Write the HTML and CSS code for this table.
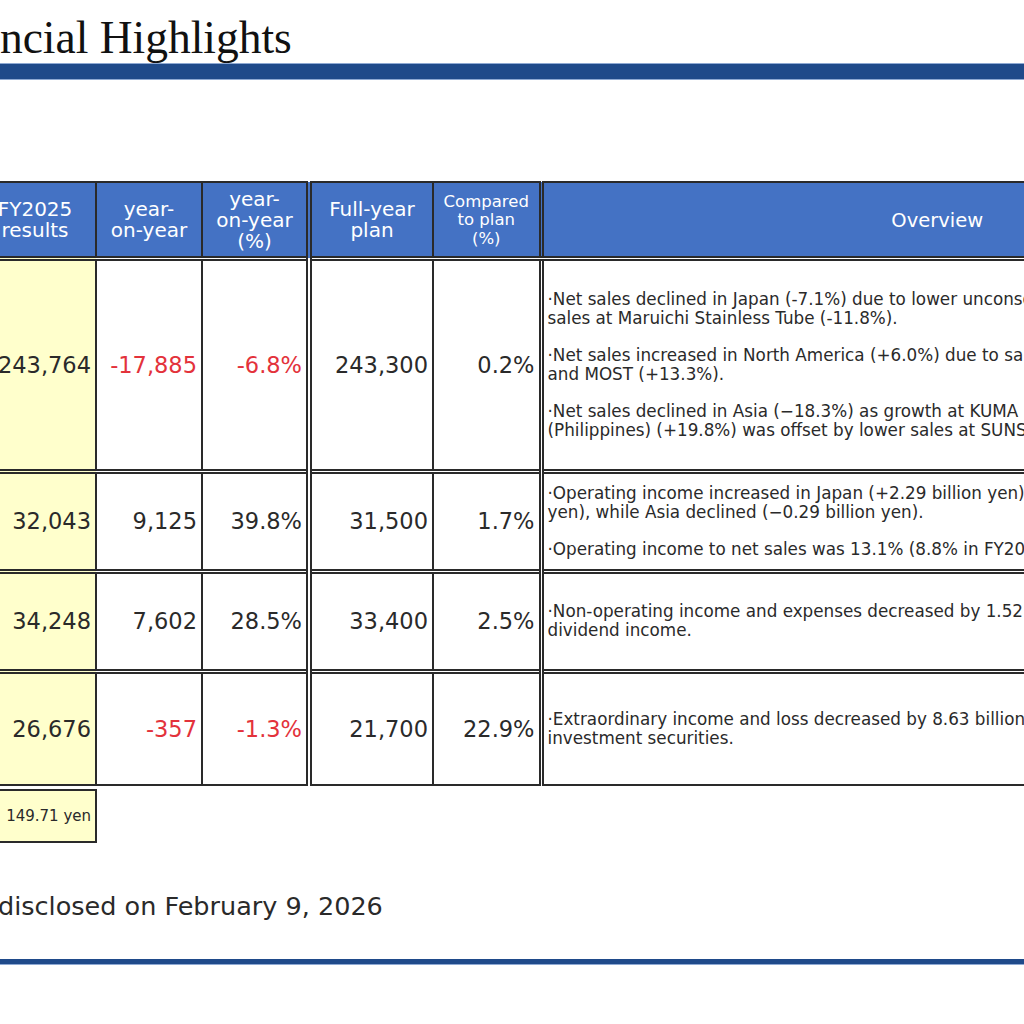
FILE: index.html
```html
<!DOCTYPE html>
<html>

<head>
    <meta charset="utf-8">
    <link rel="stylesheet" href="styles.css">
</head>

<body>

    <div class="slide">
        <h1 class="title">Financial Highlights</h1>
        <div class="rule"></div>

        <table class="results">
            <colgroup>
                <col class="c-fy">
                <col class="c-yoy">
                <col class="c-yoyp">
                <col class="c-plan">
                <col class="c-cmp">
                <col class="c-ov">
            </colgroup>
            <thead>
                <tr>
                    <th>FY2025<br>results</th>
                    <th>year-<br>on-year</th>
                    <th>year-<br>on-year<br>(%)</th>
                    <th class="grp">Full-year<br>plan</th>
                    <th class="small">Compared<br>to plan<br>(%)</th>
                    <th class="grp2 ov-head">Overview</th>
                </tr>
            </thead>
            <tbody>
                <tr class="r1">
                    <td class="fy">243,764</td>
                    <td class="neg">-17,885</td>
                    <td class="neg">-6.8%</td>
                    <td class="grp">243,300</td>
                    <td>0.2%</td>
                    <td class="ov grp2">
                        <p>·Net sales declined in Japan (-7.1%) due to lower unconsolidated<br>sales at Maruichi Stainless Tube (-11.8%).</p>
                        <p>·Net sales increased in North America (+6.0%) due to sales<br>and MOST (+13.3%).</p>
                        <p>·Net sales declined in Asia (−18.3%) as growth at KUMA<br>(Philippines) (+19.8%) was offset by lower sales at SUNSCO.</p>
                    </td>
                </tr>
                <tr class="r2">
                    <td class="fy">32,043</td>
                    <td>9,125</td>
                    <td>39.8%</td>
                    <td class="grp">31,500</td>
                    <td>1.7%</td>
                    <td class="ov grp2">
                        <p>·Operating income increased in Japan (+2.29 billion yen)<br>yen), while Asia declined (−0.29 billion yen).</p>
                        <p>·Operating income to net sales was 13.1% (8.8% in FY2024).</p>
                    </td>
                </tr>
                <tr class="r3">
                    <td class="fy">34,248</td>
                    <td>7,602</td>
                    <td>28.5%</td>
                    <td class="grp">33,400</td>
                    <td>2.5%</td>
                    <td class="ov grp2">
                        <p>·Non-operating income and expenses decreased by 1.52 billion yen<br>dividend income.</p>
                    </td>
                </tr>
                <tr class="r4">
                    <td class="fy">26,676</td>
                    <td class="neg">-357</td>
                    <td class="neg">-1.3%</td>
                    <td class="grp">21,700</td>
                    <td>22.9%</td>
                    <td class="ov grp2">
                        <p>·Extraordinary income and loss decreased by 8.63 billion yen<br>investment securities.</p>
                    </td>
                </tr>
            </tbody>
        </table>

        <div class="rate">149.71 yen</div>

        <p class="note">disclosed on February 9, 2026</p>

        <div class="rule-bottom"></div>
    </div>

</body>

</html>
```

FILE: styles.css
```css
* {
    box-sizing: border-box;
}

body {
    margin: 0px;
    padding: 0px;
    overflow: hidden;
    background: #ffffff;
    font-family: "DejaVu Sans", "Noto Sans", sans-serif;
    color: #2a2a2a;
}

.slide {
    width: 1440px;
    margin-left: -81px;
}

.title {
    margin: 0px;
    padding-top: 12px;
    height: 63px;
    font-family: "Liberation Serif", "Times New Roman", serif;
    font-weight: normal;
    font-size: 45.5px;
    line-height: 51px;
    color: #111111;
}

.rule {
    height: 17px;
    background: #1f4a8a;
    border-top: 1px solid #8ea9d3;
    border-bottom: 1px solid #8ea9d3;
}

/* results table */

.results {
    margin-top: 101px;
    margin-left: 54px;
    border-collapse: collapse;
    table-layout: fixed;
    width: 1358px;
}

.c-fy {
    width: 122px;
}

.c-yoy {
    width: 106px;
}

.c-yoyp {
    width: 107px;
}

.c-plan {
    width: 124px;
}

.c-cmp {
    width: 108px;
}

.c-ov {
    width: 791px;
}

.results th,
.results td {
    border: 2px solid #2a2a2a;
    padding: 0px 4px;
}

.results th {
    height: 76px;
    padding-top: 2px;
    background: #4472c4;
    color: #ffffff;
    font-weight: normal;
    font-size: 20px;
    line-height: 21px;
    text-align: center;
    border-bottom: 5px double #2a2a2a;
}

.results th.small {
    font-size: 16.5px;
    line-height: 18.5px;
}

.results th.ov-head {
    font-size: 19.5px;
}

.results td {
    text-align: right;
    font-size: 22.5px;
    white-space: nowrap;
}

.results tbody tr + tr td {
    border-top: 5px double #2a2a2a;
}

.results .grp {
    border-left: 6px double #2a2a2a;
}

.results .grp2 {
    border-left: 5px double #2a2a2a;
}

.results .fy {
    background: #ffffcc;
}

.results .neg {
    color: #e3323b;
}

.r1 td {
    height: 213px;
}

.r2 td,
.r3 td {
    height: 100px;
}

.r4 td {
    height: 114px;
}

.results td.ov {
    text-align: left;
    font-size: 16.8px;
    line-height: 19px;
    overflow: hidden;
}

.ov p {
    margin: 0px;
}

.ov p + p {
    margin-top: 18px;
}

.rate {
    margin-top: 3px;
    margin-left: 54px;
    width: 124px;
    height: 54px;
    padding-right: 4px;
    background: #ffffcc;
    border: 2px solid #2a2a2a;
    font-size: 15px;
    line-height: 50px;
    text-align: right;
}

.note {
    margin: 46px 0px 0px 79px;
    font-size: 25.5px;
    line-height: 34px;
}

.rule-bottom {
    margin-top: 36px;
    height: 6px;
    background: #1f4a8a;
    border-bottom: 1px solid #8ea9d3;
}
```
